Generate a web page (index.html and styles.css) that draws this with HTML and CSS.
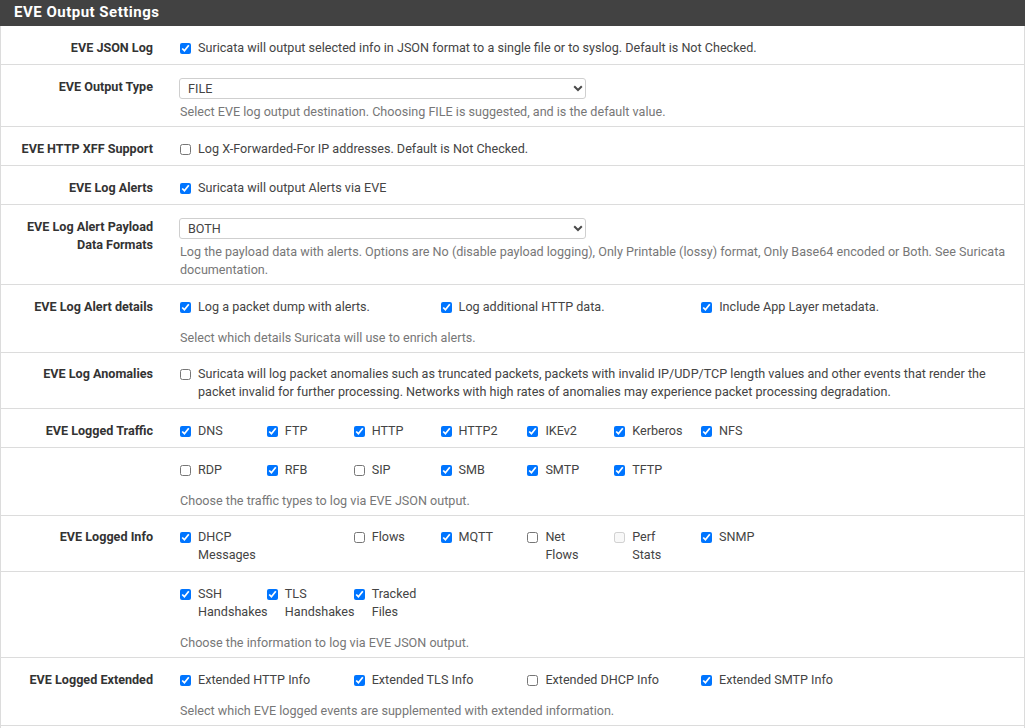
FILE: index.html
```html
<!DOCTYPE html>
<html lang="en">
<head>
<meta charset="utf-8">
<title>EVE Output Settings</title>
<link rel="stylesheet" href="styles.css">
</head>
<body>
<div class="panel">
  <div class="panel-heading"><h2 class="panel-title">EVE Output Settings</h2></div>

  <div class="form-row">
    <div class="lbl">EVE JSON Log</div>
    <div class="ctl">
      <label class="chk"><input type="checkbox" checked><span>Suricata will output selected info in JSON format to a single file or to syslog. Default is Not Checked.</span></label>
    </div>
  </div>

  <div class="form-row with-select">
    <div class="lbl">EVE Output Type</div>
    <div class="ctl">
      <div class="select-wrap">
        <select class="sel"><option>FILE</option><option>SYSLOG</option><option>REDIS</option></select>
        <svg class="chev" width="10" height="7" viewBox="0 0 10 7"><path d="M1.2 1.3 L5 5 L8.8 1.3" fill="none" stroke="#4a4a4a" stroke-width="2"/></svg>
      </div>
      <div class="help sel-help">Select EVE log output destination. Choosing FILE is suggested, and is the default value.</div>
    </div>
  </div>

  <div class="form-row">
    <div class="lbl">EVE HTTP XFF Support</div>
    <div class="ctl">
      <label class="chk"><input type="checkbox"><span>Log X-Forwarded-For IP addresses. Default is Not Checked.</span></label>
    </div>
  </div>

  <div class="form-row">
    <div class="lbl">EVE Log Alerts</div>
    <div class="ctl">
      <label class="chk"><input type="checkbox" checked><span>Suricata will output Alerts via EVE</span></label>
    </div>
  </div>

  <div class="form-row with-select">
    <div class="lbl">EVE Log Alert Payload Data Formats</div>
    <div class="ctl">
      <div class="select-wrap">
        <select class="sel"><option>BOTH</option><option>NO</option><option>ONLY PRINTABLE</option><option>ONLY BASE64</option></select>
        <svg class="chev" width="10" height="7" viewBox="0 0 10 7"><path d="M1.2 1.3 L5 5 L8.8 1.3" fill="none" stroke="#4a4a4a" stroke-width="2"/></svg>
      </div>
      <div class="help sel-help">Log the payload data with alerts. Options are No (disable payload logging), Only Printable (lossy) format, Only Base64 encoded or Both. See Suricata documentation.</div>
    </div>
  </div>

  <div class="form-row with-help">
    <div class="lbl">EVE Log Alert details</div>
    <div class="ctl">
      <div class="cols cols3">
        <label class="chk"><input type="checkbox" checked><span>Log a packet dump with alerts.</span></label>
        <label class="chk"><input type="checkbox" checked><span>Log additional HTTP data.</span></label>
        <label class="chk"><input type="checkbox" checked><span>Include App Layer metadata.</span></label>
      </div>
      <div class="help grp-help">Select which details Suricata will use to enrich alerts.</div>
    </div>
  </div>

  <div class="form-row two-line">
    <div class="lbl">EVE Log Anomalies</div>
    <div class="ctl">
      <label class="chk"><input type="checkbox"><span>Suricata will log packet anomalies such as truncated packets, packets with invalid IP/UDP/TCP length values and other events that render the packet invalid for further processing. Networks with high rates of anomalies may experience packet processing degradation.</span></label>
    </div>
  </div>

  <div class="form-row">
    <div class="lbl">EVE Logged Traffic</div>
    <div class="ctl">
      <div class="cols cols7">
        <label class="chk"><input type="checkbox" checked><span>DNS</span></label>
        <label class="chk"><input type="checkbox" checked><span>FTP</span></label>
        <label class="chk"><input type="checkbox" checked><span>HTTP</span></label>
        <label class="chk"><input type="checkbox" checked><span>HTTP2</span></label>
        <label class="chk"><input type="checkbox" checked><span>IKEv2</span></label>
        <label class="chk"><input type="checkbox" checked><span>Kerberos</span></label>
        <label class="chk"><input type="checkbox" checked><span>NFS</span></label>
      </div>
    </div>
  </div>

  <div class="form-row with-help">
    <div class="lbl"></div>
    <div class="ctl">
      <div class="cols cols7">
        <label class="chk"><input type="checkbox"><span>RDP</span></label>
        <label class="chk"><input type="checkbox" checked><span>RFB</span></label>
        <label class="chk"><input type="checkbox"><span>SIP</span></label>
        <label class="chk"><input type="checkbox" checked><span>SMB</span></label>
        <label class="chk"><input type="checkbox" checked><span>SMTP</span></label>
        <label class="chk"><input type="checkbox" checked><span>TFTP</span></label>
      </div>
      <div class="help grp-help">Choose the traffic types to log via EVE JSON output.</div>
    </div>
  </div>

  <div class="form-row two-line">
    <div class="lbl">EVE Logged Info</div>
    <div class="ctl">
      <div class="cols cols7">
        <label class="chk"><input type="checkbox" checked><span>DHCP Messages</span></label>
        <div class="empty"></div>
        <label class="chk"><input type="checkbox"><span>Flows</span></label>
        <label class="chk"><input type="checkbox" checked><span>MQTT</span></label>
        <label class="chk"><input type="checkbox"><span>Net Flows</span></label>
        <label class="chk"><input type="checkbox" disabled><span>Perf Stats</span></label>
        <label class="chk"><input type="checkbox" checked><span>SNMP</span></label>
      </div>
    </div>
  </div>

  <div class="form-row with-help">
    <div class="lbl"></div>
    <div class="ctl">
      <div class="cols cols7">
        <label class="chk"><input type="checkbox" checked><span>SSH Handshakes</span></label>
        <label class="chk"><input type="checkbox" checked><span>TLS Handshakes</span></label>
        <label class="chk"><input type="checkbox" checked><span>Tracked Files</span></label>
      </div>
      <div class="help grp-help">Choose the information to log via EVE JSON output.</div>
    </div>
  </div>

  <div class="form-row with-help">
    <div class="lbl">EVE Logged Extended</div>
    <div class="ctl">
      <div class="cols cols4">
        <label class="chk"><input type="checkbox" checked><span>Extended HTTP Info</span></label>
        <label class="chk"><input type="checkbox" checked><span>Extended TLS Info</span></label>
        <label class="chk"><input type="checkbox"><span>Extended DHCP Info</span></label>
        <label class="chk"><input type="checkbox" checked><span>Extended SMTP Info</span></label>
      </div>
      <div class="help grp-help">Select which EVE logged events are supplemented with extended information.</div>
    </div>
  </div>

  <div class="form-row tail"></div>
</div>
</body>
</html>
```

FILE: styles.css
```css
* { box-sizing: border-box; }

html, body {
  margin: 0;
  padding: 0;
  background: #ffffff;
}

body {
  font-family: Roboto, "Liberation Sans", Arial, sans-serif;
  font-size: 12.6px;
  line-height: 18px;
  color: #444444;
  overflow: hidden;
}

.panel {
  width: 1025px;
  border-left: 1px solid #dcdcdc;
  border-right: 1px solid #dcdcdc;
}

.panel-heading {
  background: #424242;
  height: 26px;
  margin: 0 -1px;
  padding-left: 14px;
}

.panel-title {
  margin: 0;
  font-size: 15px;
  font-weight: 700;
  line-height: 25px;
  color: #ffffff;
  letter-spacing: 0.5px;
}

.form-row {
  display: grid;
  grid-template-columns: 164px 1fr;
  padding: 13px 0 7px;
  border-bottom: 1px solid #dcdcdc;
}

.form-row.with-select { padding-bottom: 5px; }
.form-row.with-help { padding-bottom: 5px; }
.form-row.two-line { padding-top: 12px; padding-bottom: 7px; }
.form-row.tail { height: 20px; border-bottom: 0; padding: 0; }

.lbl {
  text-align: right;
  padding: 0 12px 0 15px;
  font-weight: 700;
  color: #333333;
}

.ctl {
  padding: 0 12px 0 15px;
  min-width: 0;
}

.chk {
  display: flex;
  align-items: flex-start;
  gap: 7px;
  cursor: pointer;
}

.chk input {
  width: 11px;
  height: 11px;
  margin: 4px 0 0 0;
  flex: none;
}

.chk span { min-width: 0; }

.cols { display: grid; }
.cols3 { grid-template-columns: repeat(3, 260.6px); }
.cols4 { grid-template-columns: repeat(4, 173.7px); }
.cols7 { grid-template-columns: repeat(7, 86.85px); }
.cols7 .chk span { max-width: 54px; }

.select-wrap {
  position: relative;
  width: 407px;
  margin-left: -1px;
}

.sel {
  display: block;
  width: 100%;
  height: 21px;
  padding: 0 20px 0 8px;
  font-family: Roboto, "Liberation Sans", Arial, sans-serif;
  font-size: 12.6px;
  color: #444444;
  background: #ffffff;
  border: 1px solid #cfcfcf;
  border-radius: 3px;
  -webkit-appearance: none;
  appearance: none;
  outline: none;
}

.chev {
  position: absolute;
  right: 3px;
  top: 7px;
  pointer-events: none;
}

.help { color: #777777; }
.sel-help { margin-top: 4px; }
.grp-help { margin-top: 13px; }
```
